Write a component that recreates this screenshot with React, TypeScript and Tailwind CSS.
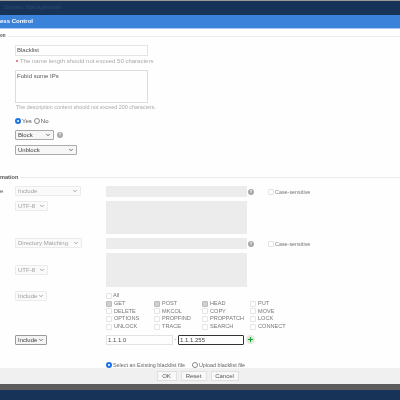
import { ChevronDown, Plus } from "lucide-react";

const font = { fontFamily: '"Liberation Sans", Arial, sans-serif' };

function Select({ label, width, dim, focus }: { label: string; width: string; dim?: boolean; focus?: boolean }) {
  return (
    <div
      className={`${width} h-[10px] flex items-center justify-between pl-[2px] pr-[2px] rounded-[1px] text-[6px] leading-none whitespace-nowrap ${
        dim
          ? "border border-[#ebebeb] bg-[#fafafa] text-[#a0a0a0]"
          : focus
            ? "border border-[#9a9a9a] bg-[#f4f4f4] text-[#444]"
            : "border border-[#aaa] bg-[#f6f6f6] text-[#444]"
      }`}
    >
      <span>{label}</span>
      <ChevronDown size={6} strokeWidth={3} className={dim ? "text-[#888] shrink-0" : "text-[#444] shrink-0"} />
    </div>
  );
}

function Help() {
  return (
    <span className="w-[6px] h-[6px] rounded-full bg-[#a8a8a8] text-white text-[4px] leading-[6px] text-center font-bold inline-block">
      ?
    </span>
  );
}

function Radio({ on, className }: { on?: boolean; className?: string }) {
  return (
    <span
      className={`w-[6px] h-[6px] shrink-0 rounded-full ${
        on ? "border-[2px] border-[#1a73e8] bg-white" : "border border-[#888] bg-white"
      } ${className ?? ""}`}
    />
  );
}

function Method({ label, checked }: { label: string; checked?: boolean }) {
  return (
    <div className="w-[48px] h-[7.7px] flex items-center gap-[2px]">
      <span className={`w-[6px] h-[6px] border rounded-[1px] ${checked ? "bg-[#cfcfcf] border-[#bbb]" : "bg-white border-[#e4e4e4]"}`} />
      <span className="text-[5.6px] leading-none text-[#777]">{label}</span>
    </div>
  );
}

function Legend({ text, size }: { text: string; size: string }) {
  return (
    <div className="flex items-center gap-[2px] h-[6px]">
      <span className={`${size} leading-none text-[#555] font-bold whitespace-nowrap`}>{text}</span>
      <div className="flex-1 h-px bg-[#ececec]" />
    </div>
  );
}

function CaseSensitive() {
  return (
    <div className="flex items-center h-[11px] ml-[1px] pt-[2px]">
      <Help />
      <span className="w-[6px] h-[6px] border border-[#e4e4e4] rounded-[1px] ml-[14px]" />
      <span className="text-[5.4px] leading-none text-[#777] ml-[1px]">Case-sensitive</span>
    </div>
  );
}

const methods: [string, boolean?][][] = [
  [["GET", true], ["POST", true], ["HEAD", true], ["PUT"]],
  [["DELETE"], ["MKCOL"], ["COPY"], ["MOVE"]],
  [["OPTIONS"], ["PROPFIND"], ["PROPPATCH"], ["LOCK"]],
  [["UNLOCK"], ["TRACE"], ["SEARCH"], ["CONNECT"]],
];

export default function App() {
  return (
    <div style={font} className="w-[400px] h-[400px] overflow-hidden bg-white flex flex-col blur-[0.6px]">
      <div className="h-px bg-[#9a9a90] shrink-0" />
      <div className="h-[13.5px] shrink-0 bg-[#173358] flex items-center pl-[4px] text-[6px] text-[#2d4a70]">
        System Management
      </div>
      <div className="h-[13px] shrink-0 bg-[#3b82db] flex items-center text-[6px] font-bold text-white">
        ess Control
      </div>
      <div className="h-px shrink-0 bg-[#a9c8f0]" />

      <div className="flex-1 min-h-0 bg-[#fefefe] flex flex-col">
        <div className="mt-[5px]">
          <Legend text="on" size="text-[4.5px]" />
        </div>

        <div className="pl-[15px] flex flex-col items-start mt-[5px]">
          <div className="w-[133px] h-[11px] border border-[#e4e4e4] px-[1px] text-[6px] leading-[9px] text-[#555]">Blacklist</div>
          <div className="flex items-center gap-[2px] h-[8px] mt-[1px] pl-[1px]">
            <span className="w-[2px] h-[2px] rounded-full bg-[#e85a5a]" />
            <span className="text-[6px] leading-none text-[#aaa]">The name length should not exceed 50 characters</span>
          </div>
          <div className="w-[133px] h-[33px] mt-[5px] border border-[#ddd] px-[1px] py-[1px] text-[6px] leading-[9px] text-[#555]">Fobid some IPs</div>
          <div className="text-[5.4px] leading-none text-[#aaa] mt-[2px] ml-[1px]">The description content should not exceed 200 characters.</div>

          <div className="flex items-center h-[7px] mt-[8px] text-[6px] text-[#555]">
            <Radio on />
            <span className="ml-px">Yes</span>
            <Radio className="ml-[2px]" />
            <span className="ml-px">No</span>
          </div>

          <div className="flex items-center gap-[3px] mt-[5px]">
            <Select label="Block" width="w-[39px]" />
            <Help />
          </div>
          <div className="mt-[5px]">
            <Select label="Unblock" width="w-[62px]" />
          </div>
        </div>

        <div className="mt-[20px]">
          <Legend text="mation" size="text-[5.6px]" />
        </div>

        <div className="mt-[5px] grid grid-cols-[15px_91px_141px_1fr] gap-y-[4px] items-start">
          <span className="text-[6px] leading-[11px] text-[#555]">e</span>
          <Select label="Include" width="w-[66px]" dim />
          <div className="h-[11px] bg-[#ececec]" />
          <CaseSensitive />

          <div />
          <Select label="UTF-8" width="w-[33px]" dim />
          <div className="h-[33px] bg-[#ececec]" />
          <div />

          <div />
          <Select label="Directory Matching" width="w-[67px]" dim />
          <div className="h-[11px] bg-[#ececec]" />
          <CaseSensitive />

          <div />
          <div className="h-[34px] flex items-end pb-[12px]">
            <Select label="UTF-8" width="w-[33px]" dim />
          </div>
          <div className="h-[34px] bg-[#ececec]" />
          <div />
        </div>

        <div className="pl-[15px] mt-[4px] flex items-start">
          <div className="w-[91px]">
            <Select label="Include" width="w-[32px]" dim />
          </div>
          <div className="flex flex-col pt-[1px]">
            <div className="h-[8px] flex items-center gap-[1px]">
              <span className="w-[6px] h-[6px] border border-[#e4e4e4] rounded-[1px]" />
              <span className="text-[5.6px] leading-none text-[#777]">All</span>
            </div>
            {methods.map((row) => (
              <div key={row[0][0]} className="flex">
                {row.map(([label, checked]) => (
                  <Method key={label} label={label} checked={checked} />
                ))}
              </div>
            ))}
          </div>
        </div>

        <div className="pl-[15px] mt-[4px] flex items-center">
          <div className="w-[91px]">
            <Select label="Include" width="w-[32px]" focus />
          </div>
          <div className="w-[67px] h-[10.5px] border border-[#e2e2e2] px-[1px] text-[6px] leading-[8.5px] text-[#555]">1.1.1.0</div>
          <span className="w-[5px] text-center text-[6px] text-[#777]">-</span>
          <div className="w-[66px] h-[10.5px] border border-[#333] rounded-[1px] px-[1px] text-[6px] leading-[8.5px] text-[#444]">1.1.1.255</div>
          <span className="w-[9px] h-[9px] ml-[2px] rounded-full bg-[#e2e8e2] flex items-center justify-center">
            <Plus size={7} strokeWidth={4} className="text-[#16a02c]" />
          </span>
        </div>

        <div className="mt-[16px] pl-[106px] flex items-center h-[7px] text-[5.4px] text-[#666]">
          <Radio on />
          <span className="ml-px">Select an Existing blacklist file</span>
          <Radio className="ml-[7px]" />
          <span className="ml-px">Upload blacklist file</span>
        </div>
      </div>

      <div className="h-[16px] shrink-0 bg-[#f0f0f0] flex items-center justify-center gap-[4px] pr-[5px]">
        <span className="w-[20px] h-[10px] bg-[#f8f8f8] border border-[#e0e0e0] text-[6px] leading-[8px] text-center text-[#555]">OK</span>
        <span className="w-[26px] h-[10px] bg-[#f8f8f8] border border-[#e0e0e0] text-[6px] leading-[8px] text-center text-[#555]">Reset</span>
        <span className="w-[28px] h-[10px] bg-[#f8f8f8] border border-[#e0e0e0] text-[6px] leading-[8px] text-center text-[#555]">Cancel</span>
      </div>
      <div className="h-[6px] shrink-0 bg-[#5c5c5c]" />
      <div className="h-[10px] shrink-0 bg-[#173358]" />
    </div>
  );
}
